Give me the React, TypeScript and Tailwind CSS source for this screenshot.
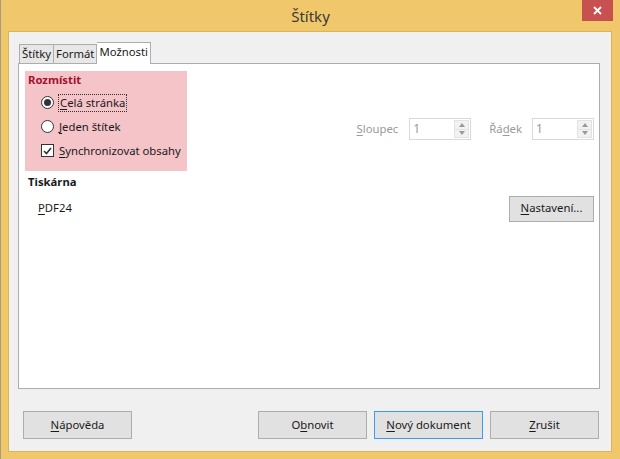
import React from "react";

const font = { fontFamily: '"Noto Sans", "Liberation Sans", sans-serif' };

function U({ children }: { children: React.ReactNode }) {
  return <span className="underline underline-offset-2">{children}</span>;
}

function Button({ children, primary }: { children: React.ReactNode; primary?: boolean }) {
  return (
    <div
      className={
        "flex h-[28px] w-[109px] items-center justify-center border bg-[#e1e1e1] text-[11.3px] text-[#1a1a1a] " +
        (primary ? "border-[#3c9df0]" : "border-[#adadad]")
      }
    >
      {children}
    </div>
  );
}

function Spin() {
  return (
    <div className="flex h-[22px] w-[62px] items-center border border-[#d9d9d9] bg-white">
      <span className="flex-1 pl-[3px] text-[12px] leading-none text-[#9a9a9a]">1</span>
      <div className="mr-[1px] flex h-[18px] w-[15px] flex-col border border-[#e3e3e3] bg-[#f2f2f2]">
        <div className="flex flex-1 items-center justify-center border-b border-[#e3e3e3]">
          <svg width="6" height="4" viewBox="0 0 6 4"><path d="M0 4 L3 0 L6 4Z" fill="#9a9a9a" /></svg>
        </div>
        <div className="flex flex-1 items-center justify-center">
          <svg width="6" height="4" viewBox="0 0 6 4"><path d="M0 0 L3 4 L6 0Z" fill="#9a9a9a" /></svg>
        </div>
      </div>
    </div>
  );
}

export default function App() {
  return (
    <div style={font} className="flex h-[459px] w-[620px] flex-col border-l border-[#a89a7c] bg-[#f0c86b]">
      <div className="relative flex h-[31px] items-center justify-center">
        <span className="pt-[1px] text-[15px] text-[#3a3a3a]">Štítky</span>
        <div className="absolute right-[7px] top-0 flex h-[21px] w-[31px] items-center justify-center bg-[#c75050]">
          <svg width="9" height="9" viewBox="0 0 9 9">
            <path d="M1 1 L8 8 M8 1 L1 8" stroke="white" strokeWidth="1.8" />
          </svg>
        </div>
      </div>
      <div className="mb-[7px] ml-[7px] mr-[8px] flex flex-1 flex-col border border-[#d8b45a] bg-[#f0f0f0] pl-[9px] pr-[11px]">
        <div className="mt-[9px] flex h-[22px] items-end pl-[1px] text-[11.3px] text-[#1a1a1a]">
          <div className="flex h-[19px] items-center border border-b-0 border-[#adadad] bg-[#e7e7e7] px-[2px]">Štítky</div>
          <div className="flex h-[19px] items-center border border-b-0 border-l-0 border-[#adadad] bg-[#e7e7e7] px-[2px]">Formát</div>
          <div className="relative -mb-[1px] flex h-[22px] items-center border border-b-0 border-l-0 border-[#adadad] bg-white px-[2px] pb-[2px]">
            Možnosti
          </div>
        </div>
        <div className="flex h-[326px] flex-col border border-[#adadad] bg-white text-[11.3px] text-[#1a1a1a]">
          <div className="flex">
            <div className="ml-[6px] mt-[7px] flex h-[100px] w-[162px] flex-col bg-[#f5c4c9] pl-[3px]">
              <div className="mt-[1px] font-bold text-[#a2122f]">Rozmístit</div>
              <div className="mt-[5px] flex items-center pl-[13px]">
                <div className="flex h-[13px] w-[13px] items-center justify-center rounded-full border border-[#333] bg-white">
                  <div className="h-[7px] w-[7px] rounded-full bg-[#333]" />
                </div>
                <span className="ml-[4px] border border-dotted border-[#333] px-[1px] leading-[16px]">
                  <U>C</U>elá stránka
                </span>
              </div>
              <div className="mt-[7px] flex items-center pl-[13px]">
                <div className="h-[13px] w-[13px] rounded-full border border-[#333] bg-white" />
                <span className="ml-[5px] leading-[16px]">
                  <U>J</U>eden štítek
                </span>
              </div>
              <div className="mt-[8px] flex items-center pl-[13px]">
                <div className="flex h-[13px] w-[13px] items-center justify-center border border-[#333] bg-white">
                  <svg width="9" height="8" viewBox="0 0 9 8">
                    <path d="M1 4 L3.5 6.5 L8 1" stroke="#333" strokeWidth="1.6" fill="none" />
                  </svg>
                </div>
                <span className="ml-[5px] leading-[16px]">
                  <U>S</U>ynchronizovat obsahy
                </span>
              </div>
            </div>
            <div className="ml-auto mr-[5px] mt-[54px] flex h-[22px] items-center text-[#9a9a9a]">
              <span className="mr-[11px]">
                <U>S</U>loupec
              </span>
              <Spin />
              <span className="ml-[18px] mr-[10px]">
                Řá<U>d</U>ek
              </span>
              <Spin />
            </div>
          </div>
          <div className="ml-[9px] mt-[3px] font-bold">Tiskárna</div>
          <div className="mt-[5px] flex items-center pl-[19px] pr-[5px]">
            <span>
              <U>P</U>DF24
            </span>
            <div className="ml-auto flex h-[26px] w-[85px] items-center justify-center border border-[#adadad] bg-[#e1e1e1]">
              <U>N</U>astavení...
            </div>
          </div>
        </div>
        <div className="mt-[22px] flex items-center pl-[5px] pr-[1px]">
          <Button>
            <U>N</U>ápověda
          </Button>
          <div className="ml-auto flex gap-[7px]">
            <Button>
              O<U>b</U>novit
            </Button>
            <Button primary>
              <U>N</U>ový dokument
            </Button>
            <Button>
              <U>Z</U>rušit
            </Button>
          </div>
        </div>
      </div>
    </div>
  );
}
